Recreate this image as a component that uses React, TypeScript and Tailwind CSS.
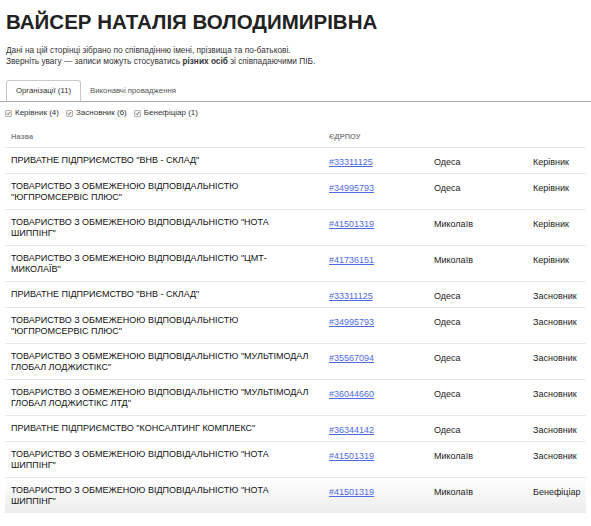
import React from "react";

const rows: [string, string, string, string][] = [
  ['ПРИВАТНЕ ПІДПРИЄМСТВО "ВНВ - СКЛАД"', "#33311125", "Одеса", "Керівник"],
  ['ТОВАРИСТВО З ОБМЕЖЕНОЮ ВІДПОВІДАЛЬНІСТЮ "ЮГПРОМСЕРВІС ПЛЮС"', "#34995793", "Одеса", "Керівник"],
  ['ТОВАРИСТВО З ОБМЕЖЕНОЮ ВІДПОВІДАЛЬНІСТЮ "НОТА ШИППІНГ"', "#41501319", "Миколаїв", "Керівник"],
  ['ТОВАРИСТВО З ОБМЕЖЕНОЮ ВІДПОВІДАЛЬНІСТЮ "ЦМТ-МИКОЛАЇВ"', "#41736151", "Миколаїв", "Керівник"],
  ['ПРИВАТНЕ ПІДПРИЄМСТВО "ВНВ - СКЛАД"', "#33311125", "Одеса", "Засновник"],
  ['ТОВАРИСТВО З ОБМЕЖЕНОЮ ВІДПОВІДАЛЬНІСТЮ "ЮГПРОМСЕРВІС ПЛЮС"', "#34995793", "Одеса", "Засновник"],
  ['ТОВАРИСТВО З ОБМЕЖЕНОЮ ВІДПОВІДАЛЬНІСТЮ "МУЛЬТІМОДАЛ ГЛОБАЛ ЛОДЖИСТІКС"', "#35567094", "Одеса", "Засновник"],
  ['ТОВАРИСТВО З ОБМЕЖЕНОЮ ВІДПОВІДАЛЬНІСТЮ "МУЛЬТІМОДАЛ ГЛОБАЛ ЛОДЖИСТІКС ЛТД"', "#36044660", "Одеса", "Засновник"],
  ['ПРИВАТНЕ ПІДПРИЄМСТВО "КОНСАЛТИНГ КОМПЛЕКС"', "#36344142", "Одеса", "Засновник"],
  ['ТОВАРИСТВО З ОБМЕЖЕНОЮ ВІДПОВІДАЛЬНІСТЮ "НОТА ШИППІНГ"', "#41501319", "Миколаїв", "Засновник"],
  ['ТОВАРИСТВО З ОБМЕЖЕНОЮ ВІДПОВІДАЛЬНІСТЮ "НОТА ШИППІНГ"', "#41501319", "Миколаїв", "Бенефіціар"],
];

function Check({ label }: { label: string }) {
  return (
    <label className="flex items-center gap-[3px]">
      <span className="flex h-[7px] w-[7px] items-center justify-center rounded-[1px] border border-[#b5b5b5] bg-[#f2f2f2]">
        <svg viewBox="0 0 8 8" className="h-[7px] w-[7px]">
          <path d="M1.5 4.2 L3.2 6 L6.6 1.6" fill="none" stroke="#555" strokeWidth="1.3" />
        </svg>
      </span>
      <span>{label}</span>
    </label>
  );
}

export default function App() {
  return (
    <div
      className="min-h-[526px] w-[591px] overflow-hidden bg-white px-[5px] text-[#222]"
      style={{ fontFamily: '"Liberation Sans", Arial, sans-serif' }}
    >
      <h1 className="pl-px pt-[8px] text-[20.5px] font-bold leading-[28px] text-[#222]">
        ВАЙСЕР НАТАЛІЯ ВОЛОДИМИРІВНА
      </h1>
      <p className="mt-[9px] pl-px text-[8.3px] leading-[11px] text-[#333]">
        Дані на цій сторінці зібрано по співпадінню імені, прізвища та по-батькові.
        <br />
        Зверніть увагу — записи можуть стосуватись <b>різних осіб</b> зі співпадаючими ПІБ.
      </p>

      <div className="-mx-[5px] mt-[13px] flex border-b border-[#aaa] pl-[6px] text-[7.8px]">
        <div className="-mb-px flex h-[21px] w-[75px] items-center justify-center rounded-t-[3px] border border-b-0 border-[#c8c8c8] bg-white text-[#333]">
          Організації (11)
        </div>
        <div className="flex h-[21px] items-center pl-[9px] text-[#555]">Виконавчі провадження</div>
      </div>

      <div className="mt-[6px] flex h-[10px] items-center gap-[7px] text-[8px] text-[#333]">
        <Check label="Керівник (4)" />
        <Check label="Засновник (6)" />
        <Check label="Бенефіціар (1)" />
      </div>

      <div className="flex h-[29px] items-end pb-[5px] text-[7.5px] font-bold leading-[10px] text-[#888]">
        <div className="w-[318px] pl-[6px]">Назва</div>
        <div className="pl-[6px]">ЄДРПОУ</div>
      </div>

      <div className="text-[9px] leading-[11px]">
        {rows.map((r, i) => (
          <div
            key={i}
            className={
              "flex min-h-[26px] border-t border-[#e8e8e8] " +
              (i === rows.length - 1 ? "bg-gradient-to-b from-white to-[#ececec]" : "")
            }
          >
            <div className="flex w-[318px] items-center py-[6.5px] pl-[6px] pr-[10px] text-[#111]">
              <span>{r[0]}</span>
            </div>
            <div className="w-[105px] pl-[6px] pt-[8.5px]">
              <a href="#" className="text-[#4f6ae0] underline">
                {r[1]}
              </a>
            </div>
            <div className="w-[99px] pl-[6px] pt-[8.5px] text-[#222]">{r[2]}</div>
            <div className="flex-1 pl-[6px] pt-[8.5px] text-[#222]">{r[3]}</div>
          </div>
        ))}
      </div>
    </div>
  );
}
